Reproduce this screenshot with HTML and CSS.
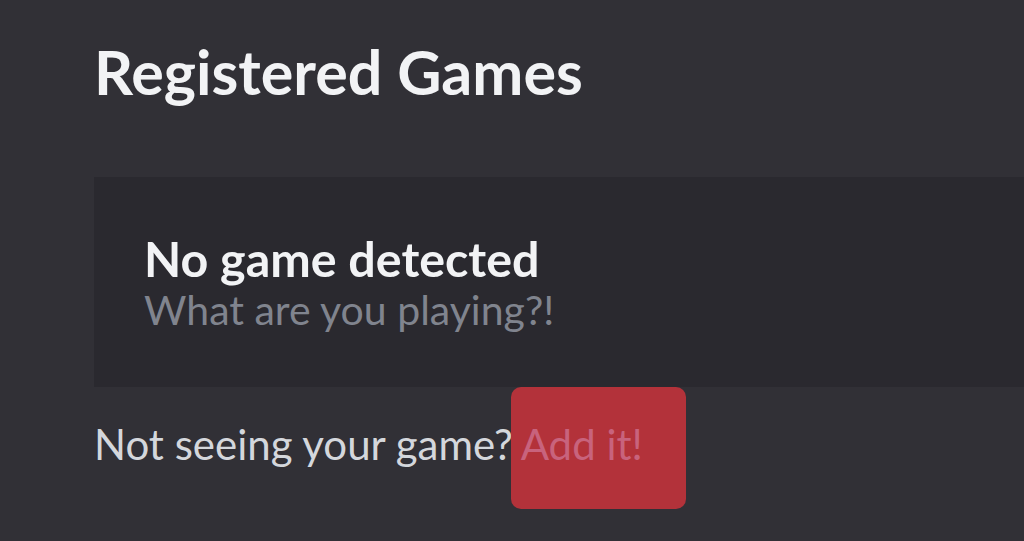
FILE: index.html
```html
<!DOCTYPE html>
<html>
<head>
<meta charset="utf-8">
<link rel="stylesheet" href="styles.css">
</head>
<body>
<main class="page">
  <h1 class="title">Registered Games</h1>
  <section class="card">
    <div class="card-title">No game detected</div>
    <div class="card-sub">What are you playing?!</div>
  </section>
  <p class="hint">Not seeing your game? <a class="add-link" href="#"><span class="add-text">Add it!</span></a></p>
</main>
</body>
</html>
```

FILE: styles.css
```css
html, body {
  margin: 0;
  padding: 0;
  background: #313036;
  height: 100%;
  overflow: hidden;
}
.page {
  padding: 35px 0 0 94px;
  font-family: "Lato", "Noto Sans", sans-serif;
}
.title {
  margin: 0;
  font-size: 61px;
  line-height: 74px;
  font-weight: 700;
  color: #f2f3f5;
}
.card {
  margin-top: 68px;
  height: 210px;
  background: #2a292f;
  padding: 0 0 0 50px;
  display: flex;
  flex-direction: column;
  justify-content: center;
}
.card-title {
  font-size: 48.4px;
  line-height: 56px;
  font-weight: 700;
  color: #f2f3f5;
}
.card-sub {
  font-size: 41px;
  line-height: 48px;
  color: #80848e;
}
.hint {
  margin: 32px 0 0;
  font-size: 42px;
  line-height: 50px;
  color: #d4d7dc;
}
.add-link {
  position: relative;
  margin-left: -3px;
  color: #c8637d;
  text-decoration: none;
}
.add-link::before {
  content: "";
  position: absolute;
  left: -10px;
  right: -43px;
  top: -32px;
  bottom: -40px;
  background: #b3323a;
  border-radius: 10px;
}
.add-text {
  position: relative;
}
```
